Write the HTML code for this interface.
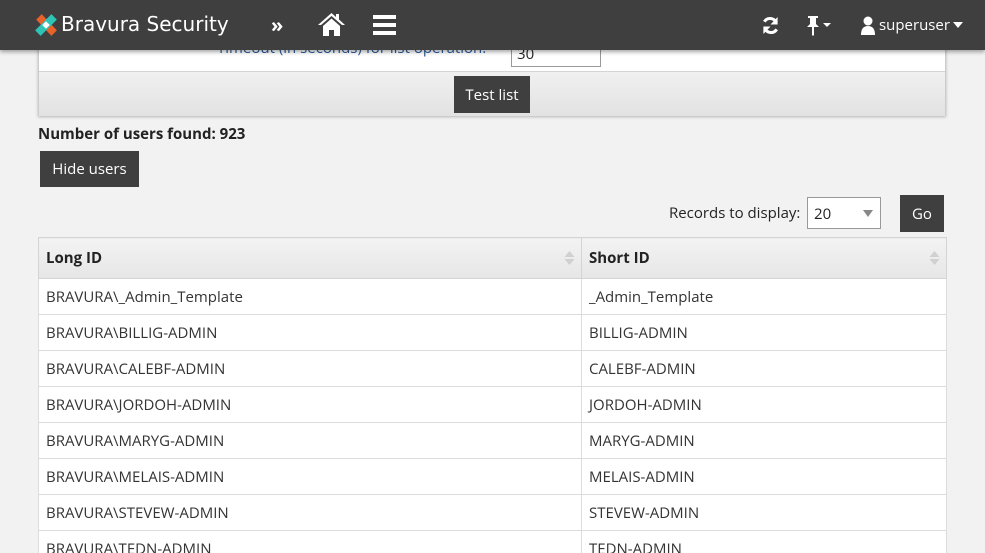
<!DOCTYPE html>
<html><head><style>
*{box-sizing:border-box;margin:0;padding:0}
html,body{width:985px;height:553px;overflow:hidden}
body{background:#f2f2f2;font-family:"Open Sans","Liberation Sans",sans-serif;font-size:15px;color:#222;position:relative}
.nav{position:absolute;top:0;left:0;width:985px;height:50px;background:#3f3f3f;box-shadow:0 2px 4px rgba(0,0,0,.35);z-index:5;color:#fff}
.abs{position:absolute}
.panel{position:absolute;left:38px;top:36px;width:908px;height:80px;background:#fff;border:1px solid #ccc;box-shadow:0 1px 3px rgba(0,0,0,.25)}
.pfoot{position:absolute;left:0;top:34px;width:906px;height:45px;background:linear-gradient(#f0f0f0,#e2e2e2);border-top:1px solid #d4d4d4}
.btn{position:absolute;background:#3f3f3f;color:#fff;font-size:15px;display:flex;align-items:center;justify-content:center}
table{position:absolute;left:38px;top:237px;width:909px;border-collapse:collapse;background:#fff}
th{height:41px;text-align:left;font-weight:bold;padding-left:7px;background:linear-gradient(#f3f3f3,#e6e6e6);border:1px solid #d4d4d4;position:relative;font-size:15px}
td{height:36px;padding-left:7px;border:1px solid #dcdcdc;font-size:15px;color:#333}
.sort{position:absolute;right:6px;top:12px;width:11px}
</style></head><body>
<div class="nav">
 <svg class="abs" style="left:33px;top:12px" width="26" height="26" viewBox="0 0 24 24">
  <path d="M3 7 L8 2 L22 17 L17 22Z" fill="#e8622a"/>
  <path d="M2 17 L17 2 L22 7 L7 22Z" fill="#2ec4b6"/>
  <path d="M12 8.5 L15.5 12 L12 15.5 L8.5 12Z" fill="#fff"/>
 </svg>
 <div class="abs" style="left:61px;top:12px;font-family:'DejaVu Sans','Liberation Sans',sans-serif;font-size:20px;font-weight:normal">Bravura Security</div>
 <div class="abs" style="left:271px;top:11px;font-size:20px;font-weight:bold">»</div>
 <svg class="abs" style="left:317px;top:12px" width="29" height="25" viewBox="0 0 29 25"><path d="M14.5 1 L1 13 L4 13 L14.5 4 L25 13 L28 13 L22 7.5 L22 2 L19 2 L19 5 Z" fill="#fff"/><path d="M6 14 L14.5 6.5 L23 14 L23 24 L17 24 L17 18 L12 18 L12 24 L6 24Z" fill="#fff"/></svg>
 <div class="abs" style="left:373px;top:15px;width:23px;height:4px;background:#fff;box-shadow:0 8px 0 #fff,0 16px 0 #fff"></div>
 <svg class="abs" style="left:761px;top:16px" width="19" height="19" viewBox="0 0 20 20"><path d="M16 7 A7 7 0 0 0 3.5 6" stroke="#fff" stroke-width="3.2" fill="none"/><path d="M17.5 1 V9 H10Z" fill="#fff"/><path d="M4 13 A7 7 0 0 0 16.5 14" stroke="#fff" stroke-width="3.2" fill="none"/><path d="M2.5 19 V11 H10Z" fill="#fff"/></svg>
 <svg class="abs" style="left:806px;top:15px" width="28" height="22" viewBox="0 0 28 22"><path d="M2 1 H12 V3 H10 V9 L13 12 H8 V20 L7 21 L6 20 V12 H1 L4 9 V3 H2Z" fill="#fff"/><path d="M17 8 L25 8 L21 12Z" fill="#fff"/></svg>
 <svg class="abs" style="left:860px;top:16px" width="16" height="20" viewBox="0 0 16 20"><circle cx="8" cy="5" r="4.5" fill="#fff"/><path d="M1 19 Q1 10 8 10 Q15 10 15 19Z" fill="#fff"/></svg>
 <div class="abs" style="left:879px;top:15px;font-size:15px">superuser</div>
 <svg class="abs" style="left:953px;top:22px" width="10" height="6"><path d="M0 0 H10 L5 6Z" fill="#fff"/></svg>
</div>
<div class="panel">
 <div class="abs" style="left:178px;top:1px;color:#2a5b9c;font-size:15px">Timeout (in seconds) for list operation:</div>
 <div class="abs" style="left:472px;top:2px;width:90px;height:28px;border:1px solid #999;padding:4px 0 0 5px;font-size:15px">30</div>
 <div class="pfoot"></div>
</div>
<div class="btn" style="left:454px;top:76px;width:76px;height:37px">Test list</div>
<div class="abs" style="left:38px;top:124px;font-weight:bold;font-size:15px">Number of users found: 923</div>
<div class="btn" style="left:40px;top:151px;width:99px;height:36px">Hide users</div>
<div class="abs" style="left:669px;top:203px;font-size:15px">Records to display:</div>
<div class="abs" style="left:807px;top:197px;width:74px;height:32px;border:1px solid #999;background:#fff;padding:6px 0 0 6px;font-size:15px">20<svg class="abs" style="left:55px;top:12px" width="10" height="7"><path d="M0 0H10L5 7Z" fill="#888"/></svg></div>
<div class="btn" style="left:900px;top:195px;width:44px;height:37px;font-size:15px">Go</div>
<table>
<tr><th style="width:543px">Long ID<svg class="sort" viewBox="0 0 10 16" height="16"><path d="M0 7L5 1L10 7Z M0 9L5 15L10 9Z" fill="#d0d0d0"/></svg></th><th>Short ID<svg class="sort" viewBox="0 0 10 16" height="16"><path d="M0 7L5 1L10 7Z M0 9L5 15L10 9Z" fill="#d0d0d0"/></svg></th></tr>
<tr><td>BRAVURA\_Admin_Template</td><td>_Admin_Template</td></tr>
<tr><td>BRAVURA\BILLIG-ADMIN</td><td>BILLIG-ADMIN</td></tr>
<tr><td>BRAVURA\CALEBF-ADMIN</td><td>CALEBF-ADMIN</td></tr>
<tr><td>BRAVURA\JORDOH-ADMIN</td><td>JORDOH-ADMIN</td></tr>
<tr><td>BRAVURA\MARYG-ADMIN</td><td>MARYG-ADMIN</td></tr>
<tr><td>BRAVURA\MELAIS-ADMIN</td><td>MELAIS-ADMIN</td></tr>
<tr><td>BRAVURA\STEVEW-ADMIN</td><td>STEVEW-ADMIN</td></tr>
<tr><td>BRAVURA\TEDN-ADMIN</td><td>TEDN-ADMIN</td></tr>
</table>
</body></html>
